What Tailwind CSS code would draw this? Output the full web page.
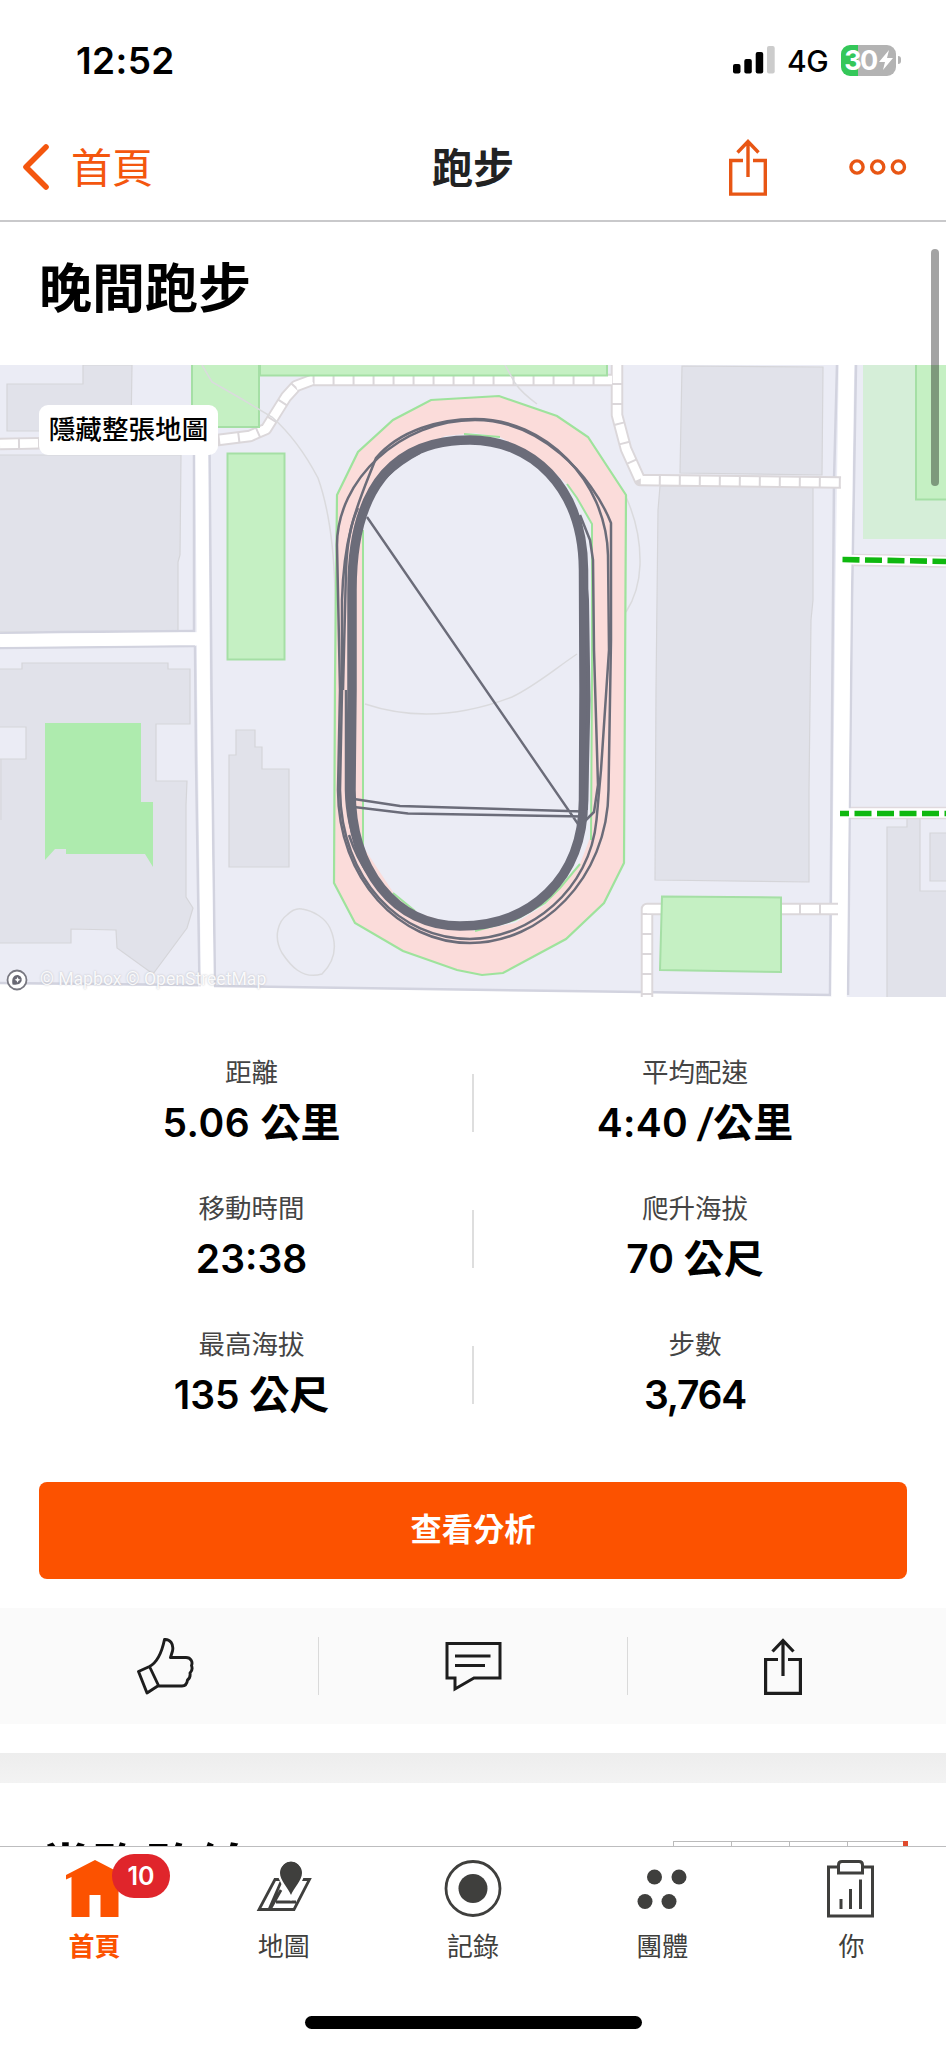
<!DOCTYPE html>
<html lang="zh-Hant">
<head>
<meta charset="utf-8">
<title>晚間跑步</title>
<script src="https://cdn.jsdelivr.net/npm/@tailwindcss/browser@4"></script>
</head>
<body class="bg-white">
<div class="relative flex h-[2048px] w-[946px] flex-col overflow-hidden bg-white font-['Inter','Noto_Sans_CJK_TC',sans-serif] text-black">

  <!-- Status bar -->
  <header class="flex h-[120px] shrink-0 items-center pl-[76px] pr-[45px]">
    <span class="text-[37px] leading-none font-semibold tracking-[0.4px]">12:52</span>
    <div class="ml-auto flex items-center">
      <svg class="h-7 w-[42px]" viewBox="0 0 42 28">
        <rect x="0" y="18" width="7.5" height="9.5" rx="2"/>
        <rect x="11.3" y="13" width="7.5" height="14.5" rx="2"/>
        <rect x="22.7" y="6" width="7.5" height="21.5" rx="2"/>
        <rect x="34" y="0" width="7.7" height="27.5" rx="2" fill="#ccc"/>
      </svg>
      <span class="ml-[12px] w-[54px] pt-[2px] text-[30px] leading-none font-medium tracking-[-0.5px] whitespace-nowrap">4G</span>
      <div class="flex h-[31px] w-[55px] items-center justify-center rounded-[9px] bg-linear-to-r from-[#34c759] from-30% to-[#b3b3b3] to-30% text-white">
        <span class="text-[27px] leading-none font-bold tracking-[-1.5px]">30</span>
        <svg class="ml-[2px] h-[22px] w-[14px]" viewBox="0 0 14 22"><path d="M10 1 0 13h6L4 21 14 9H8z" fill="#fff"/></svg>
      </div>
      <span class="ml-[2px] h-2 w-[3px] rounded-r-full bg-[#b3b3b3]"></span>
    </div>
  </header>

  <!-- Navigation bar -->
  <nav class="grid h-[102px] shrink-0 grid-cols-3 items-center border-b-2 border-[#c9c9cb] pb-[6px]">
    <div class="flex items-center pl-[22px] text-[#f4560e]">
      <svg class="h-[48px] w-[28px]" viewBox="0 0 28 48" fill="none" stroke="currentColor" stroke-width="5.6" stroke-linecap="round" stroke-linejoin="round"><path d="M24 4 4 24l20 20"/></svg>
      <span class="ml-[21px] pt-[2px] text-[41px] leading-none font-normal">首頁</span>
    </div>
    <span class="pt-[2px] text-center text-[41px] leading-none font-bold text-[#222]">跑步</span>
    <div class="flex items-center justify-end pr-[39px] text-[#e85614]">
      <svg class="h-[57px] w-[38px]" viewBox="0 0 38 57" fill="none" stroke="currentColor" stroke-width="3.4"><path d="M14 21.500H1.700v33.600h34.600V21.500H24M19 38V2M8.500 13.500 19 2.500l10.500 11"/></svg>
      <svg class="ml-[82px] h-4 w-[58px]" viewBox="0 0 58 16" fill="none" stroke="currentColor" stroke-width="3.4"><circle cx="8" cy="8" r="6.1"/><circle cx="28.700" cy="8" r="6.1"/><circle cx="49.400" cy="8" r="6.1"/></svg>
    </div>
  </nav>

  <main class="flex h-[1624px] shrink-0 flex-col overflow-hidden">
    <div class="flex h-[143px] shrink-0 items-center pl-[39px] pb-[8px]">
      <h1 class="text-[53px] leading-none font-bold">晚間跑步</h1>
    </div>

    <!-- Map -->
    <section class="relative h-[632px] shrink-0 bg-[#ebecf5]">
      <svg class="block h-[632px] w-[946px]" viewBox="0 365 946 632" fill="none">
        <g fill="#e1e2ea" stroke="#d5d5d9" stroke-width="1.2">
          <path d="M7 384H83V365H132L131 431H7zM-2 455H181L180 555 178 562V632H-2z"/>
          <path d="M-2 669H22V663H168V669H190V724H156V781H187L186 805V897L193 908 187 928 153 974 117 948 116 930 71 929V943H-2V759H26V727H-2z"/>
          <path d="M236 730H255V747H262V769H289V867H229V755H236z"/>
          <path d="M682 366 823 367 822 475 680 473zM660 486H813V600L811 620 809 790V882L655 880 656 690 658 510z"/>
          <path d="M887 827H907V818H920V891H948V999H887zM930 833H948V881H930z"/>
        </g>
        <path d="M45 723H141V802H153V867L145 854H66V849H55L45 860z" fill="#aeebae"/>
        <path d="M863 365H946V539H863z" fill="#d5eed8"/>
        <path d="M1 759V820" stroke="#d5d5d9"/>
        <!-- streets -->
        <g stroke="#d2d3df" stroke-width="2.500">
          <path d="M0 633.500 60 632 195 631M0 648 100 647 195 646"/>
          <path d="M194 445V632M195 646 196 760 199.500 984M209.500 445 211.500 690 215 988"/>
          <path d="M837 365 834 480 832.500 660 830 995M856 365 852 600 850 780 848 995"/>
        </g>
        <path d="M0 640.500 204 638.500M201.700 445 203.500 690 207.500 1000" stroke="#fff" stroke-width="12.800"/>
        <path d="M846.500 365 843 600 839 1000" stroke="#fff" stroke-width="15.500"/>
        <path d="M0 984 320 988 640 992.500 831 996V1000H0z" fill="#fff"/>
        <path d="M0 983 198 985M214 986 320 987.500 640 992 831 995" stroke="#d2d3df" stroke-width="2.500"/>
        <!-- footpaths -->
        <g stroke-linejoin="round">
          <g stroke="#dbd7da" stroke-width="12.500">
            <path d="M0 444 218 440 250 436 266 429 286 397 296 386 312 380H616"/>
            <path d="M617 365V415L626 449 640 480 841 482.500"/>
            <path d="M661 909H647V997M781 909H838"/>
          </g>
          <g stroke="#fff" stroke-width="8.600" stroke-dasharray="18 2">
            <path d="M0 444 218 440 250 436 266 429 286 397 296 386 312 380H612"/>
            <path d="M617 365V415L626 449 640 480 841 482.500"/>
            <path d="M661 909H647V997M781 909H838"/>
          </g>
        </g>
        <g stroke="#e0d9de" stroke-width="12.500"><path d="M853 560 946 561.500M851 813H946"/></g>
        <g stroke="#fff" stroke-width="9.500"><path d="M842 559.500 946 561.500M840 813H946"/></g>
        <g stroke="#0fb80f" stroke-width="5.600" stroke-dasharray="17 5.500"><path d="M842.500 559.500 946 561.500"/><path d="M840 813.500H946" stroke-dashoffset="8"/></g>
        <!-- green areas -->
        <g fill="#c5f0c3" stroke="#a5dfa5" stroke-width="2">
          <path d="M192 362H259V427H192zM260 362H607V375.500H260zM227.500 453.500H284.500V659.500H227.500zM916 362H950V499.500H916zM662 896.500 781 897.500V972L660 970z"/>
        </g>
        <!-- contour lines -->
        <path d="M202 365 212 382 240 398 272 417Q298 440 318 478 333 520 335 590L336 680M505 365 515 383Q522 393 537 404M626 497Q641 530 640 565 639 592 626 612M302 909C314 911 325 918 330 928 338 946 335 961 322 974 302 980 290 965 282 953 272 935 280 920 287 915 293 909 297 908 302 909z" stroke="#dadadd" stroke-width="1.500"/>
        <!-- running track -->
        <path d="M337 495 358 452 393 420 431 400 499 396 557 416 588 437 626 495 625 680 624 863 604 903 566 939 503 973 482 975 457 970 403 951 355 923 334 883 335 680z" fill="#fbdcda" stroke="#9ee39c" stroke-width="2.200"/>
        <path d="M363 520 378 480 410 453 445 436 475 433 500 437 540 459 568 485 577 498 592 522V680L591 835 580 864 545 905 515 923 475 931 415 912 393 892 364 848z" fill="#ebecf5"/>
        <path d="M363 530V848M464 434 500 437M567 484 577 498 592 524 592 680 591 840M580 864 560 888 545 903 515 920 475 931M415 911 393 893" stroke="#9ee39c" stroke-width="2"/>
        <path d="M365 704C410 719 460 717 512 697 535 686 552 671 577 654" stroke="#dadadd" stroke-width="1.500"/>
        <!-- recorded laps -->
        <g stroke="#6b6c79" stroke-linejoin="round">
          <path stroke-width="9.500" d="M352 690V590C352 480 400 440 470 440 530 440 583 485 583.500 570L584 690 583.500 800C583 880 530 926 460 926 395 926 351 870 351 790z"/>
          <path stroke-width="4" d="M582 545 587 600 588.500 700 586 810M360 515C372 485 395 465 420 452"/>
          <path stroke-width="2.500" d="M340 690 337 545C337 480 400 420 475 420 540 420 592 475 611 523V640L608.500 790C608 880 540 943 470 943 400 943 338 880 338 790z"/>
          <path stroke-width="2.500" d="M342 690 342 600C344 530 359 502 376 458 400 430 440 419 475 419 545 419 606 480 608 555L609 650 601 770 596.500 820C590 890 530 938 470 939 400 939 341 880 340 790z"/>
          <path stroke-width="2.500" d="M580 515 590 540 593 560 594 650 598 785 594 812 580 826M346 690 346 790C347 840 365 870 395 904M343 690 346 570C347 545 350 525 358 508M349 835C360 868 375 885 395 902"/>
          <path stroke-width="2.400" d="M367 517 578 824M354 799 400 806 584 811.500M354 807 408 813.500 584 816.500"/>
        </g>
      </svg>
      <div class="absolute left-[39px] top-[40px] flex h-[50px] w-[179px] items-center justify-center rounded-[9px] bg-white pb-[2px] text-[26.600px] leading-none font-medium whitespace-nowrap">隱藏整張地圖</div>
      <div class="absolute bottom-[6px] left-[6px] flex items-center">
        <svg class="h-[22px] w-[22px]" viewBox="0 0 22 22" fill="none"><circle cx="11" cy="11" r="9.500" fill="#fff" stroke="#787881" stroke-width="1.800"/><path d="M6.500 15.500C5 8 9 5.500 12 6a4.700 4.700 0 0 1 2 8.300c-2 1.500-4.500 1.600-7.500 1.200z" fill="#696974"/><path d="m11.500 8 1 2 2 .8-2 .9-1 2-.9-2-2-.9 2-.8z" fill="#fff"/></svg>
        <span class="ml-[12px] font-['Roboto',sans-serif] text-[17.600px] leading-none whitespace-nowrap text-white/90 [text-shadow:0_0_2px_#b5b6be]">© Mapbox © OpenStreetMap</span>
      </div>
    </section>

    <!-- Stats -->
    <section class="flex h-[485px] shrink-0 flex-col pt-[56px] text-center">
      <div class="grid h-[136px] grid-cols-[472px_2px_1fr]">
        <div class="pl-[31px]"><p class="text-[26.500px] leading-[38px] text-[#444]">距離</p><p class="mt-[5px] text-[39px] leading-[54px] font-semibold tracking-[0.5px] whitespace-nowrap">5.06 <span class="text-[40px] leading-none tracking-normal">公里</span></p></div>
        <div class="mt-[21px] h-[58px] bg-[#dedede]"></div>
        <div class="pr-[30px]"><p class="text-[26.500px] leading-[38px] text-[#444]">平均配速</p><p class="mt-[5px] text-[39px] leading-[54px] font-semibold tracking-[0.300px] whitespace-nowrap">4:40 <span class="inline-block -skew-x-6">/</span><span class="text-[40px] leading-none tracking-normal">公里</span></p></div>
      </div>
      <div class="grid h-[136px] grid-cols-[472px_2px_1fr]">
        <div class="pl-[31px]"><p class="text-[26.500px] leading-[38px] text-[#444]">移動時間</p><p class="mt-[5px] text-[39px] leading-[54px] font-semibold whitespace-nowrap">23:38</p></div>
        <div class="mt-[21px] h-[58px] bg-[#dedede]"></div>
        <div class="pr-[30px]"><p class="text-[26.500px] leading-[38px] text-[#444]">爬升海拔</p><p class="mt-[5px] text-[39px] leading-[54px] font-semibold whitespace-nowrap">70 <span class="text-[40px] leading-none">公尺</span></p></div>
      </div>
      <div class="grid h-[136px] grid-cols-[472px_2px_1fr]">
        <div class="pl-[31px]"><p class="text-[26.500px] leading-[38px] text-[#444]">最高海拔</p><p class="mt-[5px] text-[39px] leading-[54px] font-semibold whitespace-nowrap">135 <span class="text-[40px] leading-none">公尺</span></p></div>
        <div class="mt-[21px] h-[58px] bg-[#dedede]"></div>
        <div class="pr-[30px]"><p class="text-[26.500px] leading-[38px] text-[#444]">步數</p><p class="mt-[5px] text-[39px] leading-[54px] font-semibold tracking-[-1.300px] whitespace-nowrap">3,764</p></div>
      </div>
    </section>

    <button class="mx-[39px] flex h-[97px] shrink-0 items-center justify-center rounded-[8px] bg-[#fc5200] text-[31.300px] leading-none font-bold text-white">查看分析</button>

    <!-- Actions -->
    <section class="mt-[29px] flex h-[116px] shrink-0 items-center bg-[#fafafa] text-[#1d1d1d]">
      <div class="flex w-[318px] justify-center pl-[12px]">
        <svg class="h-[58px] w-[58px]" viewBox="0 0 58 58" fill="none" stroke="currentColor" stroke-width="2.900" stroke-linejoin="round"><path d="M13.500 29.500 2.500 34.500 11 56 22.500 48.500zM13.500 29.500Q24 24 28.500 2.500C34 2 38 7 36.500 14L34.500 20.500H50C55 20.500 57 25 55.500 28.500 56.500 31 56 34 54 36 54.500 39 53.500 41.500 51.500 43 51 47 49 49 46 49H22.500"/></svg>
      </div>
      <div class="h-[58px] w-px bg-[#dadada]"></div>
      <div class="flex w-[308px] justify-center pt-[2px]">
        <svg class="h-[50px] w-[57px]" viewBox="0 0 56 50" fill="none" stroke="currentColor" stroke-width="3"><path d="M1.500 1.500H54.500V36H28.500L9.500 47V36H1.500z"/><path d="M9.500 14H45M9.500 23.500H39.500"/></svg>
      </div>
      <div class="h-[58px] w-px bg-[#dadada]"></div>
      <div class="flex flex-1 justify-center pr-[8px]">
        <svg class="h-[57px] w-[38px]" viewBox="0 0 38 57" fill="none" stroke="currentColor" stroke-width="3.200"><path d="M14 21.500H1.600v33.800h34.800v-33.800H24M19 38V2M8.500 13.500 19 2.500l10.500 11"/></svg>
      </div>
    </section>

    <div class="mt-[29px] h-[30px] shrink-0 bg-linear-to-b from-[#ededed] to-[#f3f3f3]"></div>
    <section class="flex shrink-0 justify-between pl-[39px] pr-[38px] pt-[58px]">
      <h2 class="pt-[2px] text-[53px] leading-none font-bold">常跑路線</h2>
      <div class="flex h-8 w-[235px] border-t border-l border-[#bbb]">
        <span class="w-[58px] border-r border-[#bbb]"></span><span class="w-[58px] border-r border-[#bbb]"></span><span class="w-[58px] border-r border-[#bbb]"></span><span class="flex-1"></span><span class="-mt-px w-[5px] bg-[#e04a2c]"></span>
      </div>
    </section>
  </main>

  <!-- Tab bar -->
  <footer class="flex h-[202px] shrink-0 flex-col items-center border-t border-[#bdbdbf] bg-white">
    <div class="grid w-full grid-cols-5 pt-[13px] text-[26px] leading-[38px] text-[#3f3f3d]">
      <div class="relative flex flex-col items-center text-[#fc5200]">
        <svg class="h-[58px] w-[58px]" viewBox="0 0 58 58" fill="currentColor"><path d="M29 0 58 15v4l-5.500-2V57H34.500V35H23.500V57H5.500V17L0 19.500V15z"/></svg>
        <span class="mt-[10px] font-bold">首頁</span>
        <span class="absolute left-[112px] top-[-6px] flex h-[44px] w-[58px] items-center justify-center rounded-full bg-[#e0252b] text-[25px] leading-none font-semibold text-white">10</span>
      </div>
      <div class="flex flex-col items-center">
        <svg class="h-[58px] w-[58px]" viewBox="0 0 58 58" fill="none" stroke="currentColor" stroke-width="2.800"><path d="M27 19.500H20L4 49.500H39L54.500 19.500H46M27 19.500 14 49.500M21 42H41M15 49.500 26 30"/><path d="M36 35C33 28 25 20 25 13a11 11 0 0 1 22 0C47 20 39 28 36 35z" fill="currentColor" stroke="#fff" stroke-width="5" paint-order="stroke"/><path d="M36 32C33 25 26 18 26 11.500a10 10 0 0 1 20 0C46 18 39 25 36 32z" fill="currentColor" stroke="none"/></svg>
        <span class="mt-[10px]">地圖</span>
      </div>
      <div class="flex flex-col items-center">
        <svg class="h-[58px] w-[58px]" viewBox="0 0 58 58"><circle cx="29" cy="28.500" r="27" fill="none" stroke="currentColor" stroke-width="2.800"/><circle cx="29" cy="28.500" r="14.500" fill="currentColor"/></svg>
        <span class="mt-[10px]">記錄</span>
      </div>
      <div class="flex flex-col items-center">
        <svg class="h-[58px] w-[58px]" viewBox="0 0 58 58" fill="currentColor"><circle cx="21.500" cy="17" r="7.500"/><circle cx="46" cy="17" r="7.500"/><circle cx="12" cy="41.500" r="7.500"/><circle cx="36" cy="41.500" r="7.500"/></svg>
        <span class="mt-[10px]">團體</span>
      </div>
      <div class="flex flex-col items-center">
        <svg class="h-[58px] w-[58px]" viewBox="0 0 58 58" fill="none" stroke="currentColor" stroke-width="3"><path d="M17 7H6.500V56H50.500V7H40.500"/><path d="M16.500 13V5q0-3.500 3.500-3.500h17Q40.500 1.500 40.500 5v8z"/><path d="M19 39v10M28.500 29v20M38.500 19.500V49"/></svg>
        <span class="mt-[10px]">你</span>
      </div>
    </div>
    <div class="mt-auto mb-[19px] h-[13px] w-[337px] rounded-full bg-black"></div>
  </footer>

  <div class="absolute left-[931px] top-[249px] h-[237px] w-2 rounded-full bg-black/36"></div>
</div>
</body>
</html>
